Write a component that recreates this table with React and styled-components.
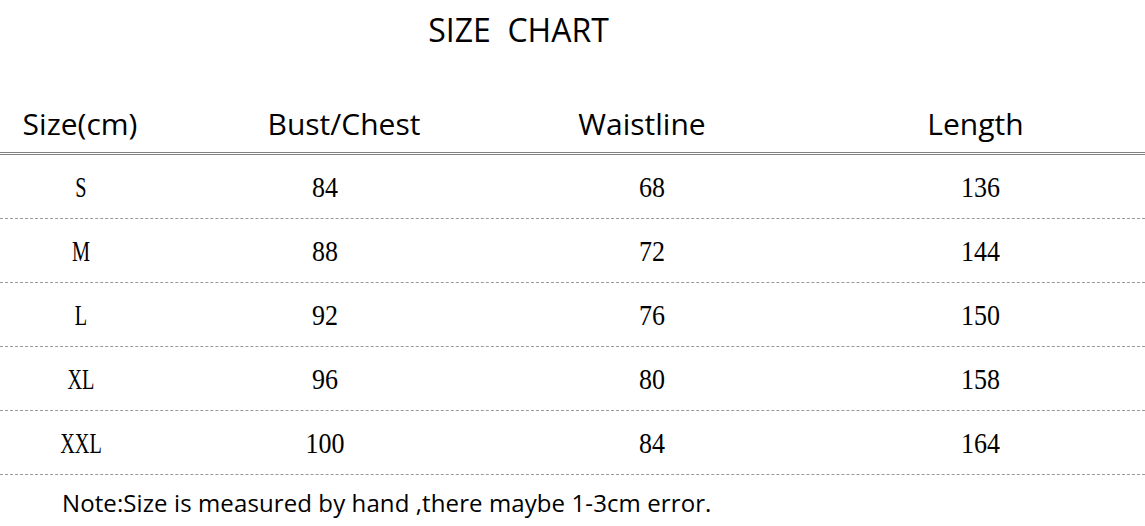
import styled, { createGlobalStyle } from "styled-components";

const Global = createGlobalStyle`
  html, body {
    margin: 0;
    padding: 0;
    background: #fff;
  }
`;

const Page = styled.div`
  width: 1145px;
  height: 526px;
  background: #fff;
  color: #000;
  overflow: hidden;
`;

const Title = styled.h1`
  margin: 0;
  height: 60px;
  line-height: 60px;
  text-align: center;
  font-family: "Open Sans", "Liberation Sans", sans-serif;
  font-weight: 400;
  font-size: 32px;
  white-space: pre;
  transform: translateX(-54px);
`;

const Grid = styled.div`
  display: grid;
  grid-template-columns: 162px 326px 328px 1fr;
  align-items: center;
`;

const HeadRow = styled(Grid)`
  margin-top: 37px;
  height: 55px;
  border-bottom: 3px double #808080;
`;

const HeadCell = styled.div`
  text-align: center;
  font-family: "Open Sans", "Liberation Sans", sans-serif;
  font-size: 30px;
  padding-left: ${(p) => (p.$shift > 0 ? p.$shift * 2 : 0)}px;
  padding-right: ${(p) => (p.$shift < 0 ? -p.$shift * 2 : 0)}px;
  padding-bottom: 3px;
`;

const Row = styled(Grid)`
  height: 63px;
  border-bottom: 1px dashed #9a9a9a;
`;

const Cell = styled.div`
  text-align: center;
  font-family: "Liberation Serif", "DejaVu Serif", serif;
  font-size: 26px;
  padding-top: 3px;
  transform: ${(p) => (p.$narrow ? "scale(0.78, 1.1)" : "scaleY(1.1)")};
`;

const Note = styled.p`
  margin: 0;
  height: 56px;
  line-height: 56px;
  padding-left: 62px;
  font-family: "Open Sans", "Liberation Sans", sans-serif;
  font-size: 24px;
  letter-spacing: 0.1px;
`;

const headers = [
  { label: "Size(cm)", shift: -1 },
  { label: "Bust/Chest", shift: 19 },
  { label: "Waistline", shift: -10 },
  { label: "Length", shift: -5 },
];

const rows = [
  ["S", 84, 68, 136],
  ["M", 88, 72, 144],
  ["L", 92, 76, 150],
  ["XL", 96, 80, 158],
  ["XXL", 100, 84, 164],
];

export default function App() {
  return (
    <Page>
      <Global />
      <Title>{"SIZE  CHART"}</Title>
      <HeadRow>
        {headers.map((h) => (
          <HeadCell key={h.label} $shift={h.shift}>
            {h.label}
          </HeadCell>
        ))}
      </HeadRow>
      {rows.map((r) => (
        <Row key={r[0]}>
          {r.map((v, i) => (
            <Cell key={i} $narrow={i === 0}>
              {v}
            </Cell>
          ))}
        </Row>
      ))}
      <Note>Note:Size is measured by hand ,there maybe 1-3cm error.</Note>
    </Page>
  );
}
